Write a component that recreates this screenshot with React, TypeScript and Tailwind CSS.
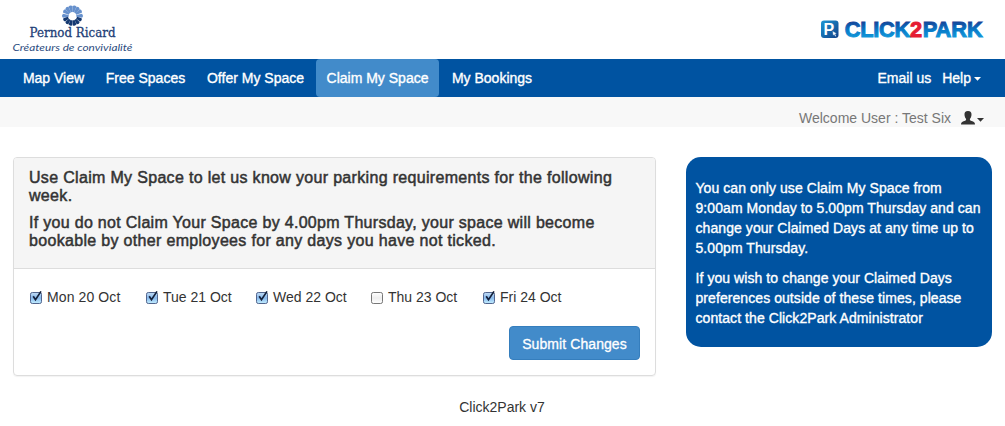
import React from "react";

const upperRays = [-90, -60, -36, -12, 12, 36, 60, 90];
const lowerRays = [116, 142, 167, 193, 218, 244];

function PernodLogo() {
  return (
    <svg width="130" height="56" viewBox="8 0 130 56" className="block">
      {upperRays.map((a) => (
        <path key={a} d="M71.6 12 L70.5 6.2 Q72.5 4.4 74.5 6.2 L73.4 12 Z" fill="#6690cc" transform={`rotate(${a} 72.5 15.8)`} />
      ))}
      {lowerRays.map((a) => (
        <path key={a} d="M71.4 11.2 L70.6 6.6 Q72.5 4.8 74.4 6.6 L73.6 11.2 Z" fill="#143870" transform={`rotate(${a} 72.5 15.8)`} />
      ))}
      <text x="29.5" y="37.2" textLength="86" lengthAdjust="spacingAndGlyphs" fontSize="12.5" fontFamily="'DejaVu Serif', serif" fill="#1e4077" stroke="#1e4077" strokeWidth="0.3">Pernod Ricard</text>
      <text x="12.5" y="51" textLength="120" lengthAdjust="spacingAndGlyphs" fontSize="9.5" fontStyle="italic" fontFamily="Lato, sans-serif" fill="#2c4c80">Créateurs de convivialité</text>
    </svg>
  );
}

function ParkLogo() {
  return (
    <svg width="176" height="34" viewBox="816 12 176 34" className="block">
      <defs>
        <linearGradient id="blue" x1="0" y1="21" x2="0" y2="38" gradientUnits="userSpaceOnUse">
          <stop offset="0" stopColor="#153f94" />
          <stop offset="0.55" stopColor="#087bc9" />
          <stop offset="1" stopColor="#129ada" />
        </linearGradient>
        <linearGradient id="tile" x1="0" y1="0" x2="1" y2="1">
          <stop offset="0" stopColor="#1c97d5" />
          <stop offset="1" stopColor="#123f87" />
        </linearGradient>
      </defs>
      <rect x="821" y="20.5" width="17.5" height="17.5" rx="3" fill="url(#tile)" />
      <text x="823.6" y="34.8" fontSize="16" fontWeight="700" fontFamily="'Liberation Sans', sans-serif" fill="#fff">P</text>
      <path d="M832.6 31 L833 35.5 L834.2 34.6 L835.2 36.6 L836.2 36 L835.2 34.1 L836.6 33.6 Z" fill="#fff" stroke="#1b5b9d" strokeWidth="0.3" />
      <text x="844.8" y="37" textLength="138" lengthAdjust="spacingAndGlyphs" fontSize="22" fontWeight="700" fontFamily="'Liberation Sans', sans-serif" strokeWidth="1">
        <tspan fill="url(#blue)" stroke="url(#blue)" letterSpacing="-0.3">CLICK</tspan><tspan fill="#e51d32" stroke="#e51d32" letterSpacing="0.6">2</tspan><tspan fill="url(#blue)" stroke="url(#blue)">PARK</tspan>
      </text>
    </svg>
  );
}

function Box({ checked }: { checked: boolean }) {
  return (
    <svg width="14" height="16" viewBox="0 0 14 16" className="block shrink-0">
      <defs>
        <linearGradient id="on" x1="0" y1="0" x2="0" y2="1">
          <stop offset="0" stopColor="#c3dcf4" />
          <stop offset="0.5" stopColor="#87b9ed" />
          <stop offset="1" stopColor="#c4efff" />
        </linearGradient>
        <linearGradient id="off" x1="0" y1="0" x2="0" y2="1">
          <stop offset="0" stopColor="#fff" />
          <stop offset="0.5" stopColor="#eee" />
          <stop offset="1" stopColor="#fff" />
        </linearGradient>
      </defs>
      <rect x="1.5" y="3.5" width="11" height="11" rx="1.8" fill={checked ? "url(#on)" : "url(#off)"} stroke={checked ? "#52658e" : "#777"} />
      {checked && <path d="M4.2 7.2 L6.5 10.8 L12 2.4" fill="none" stroke="#14203a" strokeWidth="1.7" />}
    </svg>
  );
}

const nav = [
  { label: "Map View", cls: "w-[81px]" },
  { label: "Free Spaces", cls: "w-[99px]" },
  { label: "Offer My Space", cls: "w-[117px]" },
  { label: "Claim My Space", cls: "w-[123px] rounded bg-[#428bca]" },
  { label: "My Bookings", cls: "w-[102px]" },
];

const days = [
  { label: "Mon 20 Oct", on: true, cls: "w-[116px] tracking-[0.1px]" },
  { label: "Tue 21 Oct", on: true, cls: "w-[110px]" },
  { label: "Wed 22 Oct", on: true, cls: "w-[115px]" },
  { label: "Thu 23 Oct", on: false, cls: "w-[112px]" },
  { label: "Fri 24 Oct", on: true, cls: "w-[100px]" },
];

function Caret({ className }: { className: string }) {
  return (
    <svg width="7" height="4" viewBox="0 0 7 4" className={className}>
      <path d="M0 0 H7 L3.5 3.8 Z" fill="currentColor" />
    </svg>
  );
}

export default function App() {
  return (
    <div className="h-[426px] w-[1005px] overflow-hidden bg-white font-['Liberation_Sans',Arial,sans-serif] text-sm leading-5 whitespace-nowrap text-[#333]">
      <header className="flex h-[59px] justify-between pr-[13px] pl-2">
        <PernodLogo />
        <div className="pt-3"><ParkLogo /></div>
      </header>
      <nav className="flex h-[38px] justify-between bg-[#0053a1] pr-6 pl-[13px] text-white [-webkit-text-stroke:0.35px_white]">
        <div className="flex gap-0.5">
          {nav.map((n) => (
            <a key={n.label} className={`flex items-center justify-center ${n.cls}`}>{n.label}</a>
          ))}
        </div>
        <div className="flex items-center gap-[11px]">
          <a>Email us</a>
          <a className="flex items-center">Help<Caret className="mt-0.5 ml-[3px]" /></a>
        </div>
      </nav>
      <div className="flex h-[30px] items-center justify-end bg-[#f8f8f8] pt-3 pr-[21px] text-[#777]">
        <span>Welcome User : Test Six</span>
        <svg width="14" height="14" viewBox="0 0 14 14" className="ml-2.5 text-[#333]">
          <path d="M7 0 C9.6 0 10.7 1.6 10.5 4 C10.3 6 9.6 7.2 8.9 8 C8.8 9.2 9.3 9.5 10.7 10 C12.7 10.8 14 11.2 14 13.5 H0 C0 11.2 1.3 10.8 3.3 10 C4.7 9.5 5.2 9.2 5.1 8 C4.4 7.2 3.7 6 3.5 4 C3.3 1.6 4.4 0 7 0 Z" fill="currentColor" />
        </svg>
        <Caret className="mt-1 ml-0.5 text-[#333]" />
      </div>
      <main className="flex items-start gap-[30px] px-[13px] pt-[30px]">
        <section className="h-[219px] w-[643px] overflow-hidden rounded border border-[#ddd] shadow-[0_1px_1px_rgba(0,0,0,0.05)]">
          <div className="flex h-[111px] flex-col gap-[9px] border-b border-[#ddd] bg-[#f5f5f5] px-[15px] pt-[11px] text-base leading-[18px] tracking-[0.32px] [-webkit-text-stroke:0.5px_#333]">
            <h4>
              <span className="block">Use Claim My Space to let us know your parking requirements for the following</span>
              <span className="block">week.</span>
            </h4>
            <h4>
              <span className="block tracking-[0.3px]">If you do not Claim Your Space by 4.00pm Thursday, your space will become</span>
              <span className="block">bookable by other employees for any days you have not ticked.</span>
            </h4>
          </div>
          <div className="px-[15px] pt-[18px]">
            <div className="flex">
              {days.map((d) => (
                <label key={d.label} className={`flex items-center gap-1 ${d.cls}`}>
                  <Box checked={d.on} />
                  <span>{d.label}</span>
                </label>
              ))}
            </div>
            <div className="mt-[19px] flex justify-end">
              <button className="h-[34px] w-[131px] rounded border border-[#357ebd] bg-[#428bca] pt-0.5 text-white tracking-[0.08px] [-webkit-text-stroke:0.3px_white]">Submit Changes</button>
            </div>
          </div>
        </section>
        <aside className="flex h-[190px] w-[306px] flex-col gap-2.5 rounded-[15px] bg-[#0053a1] px-[9.5px] pt-[21px] text-white tracking-[0.07px] [-webkit-text-stroke:0.35px_white]">
          <p>You can only use Claim My Space from<br />9:00am Monday to 5.00pm Thursday and can<br />change your Claimed Days at any time up to<br />5.00pm Thursday.</p>
          <p>If you wish to change your Claimed Days<br />preferences outside of these times, please<br />contact the Click2Park Administrator</p>
        </aside>
      </main>
      <footer className="mt-[21px] pr-px text-center">Click2Park v7</footer>
    </div>
  );
}
